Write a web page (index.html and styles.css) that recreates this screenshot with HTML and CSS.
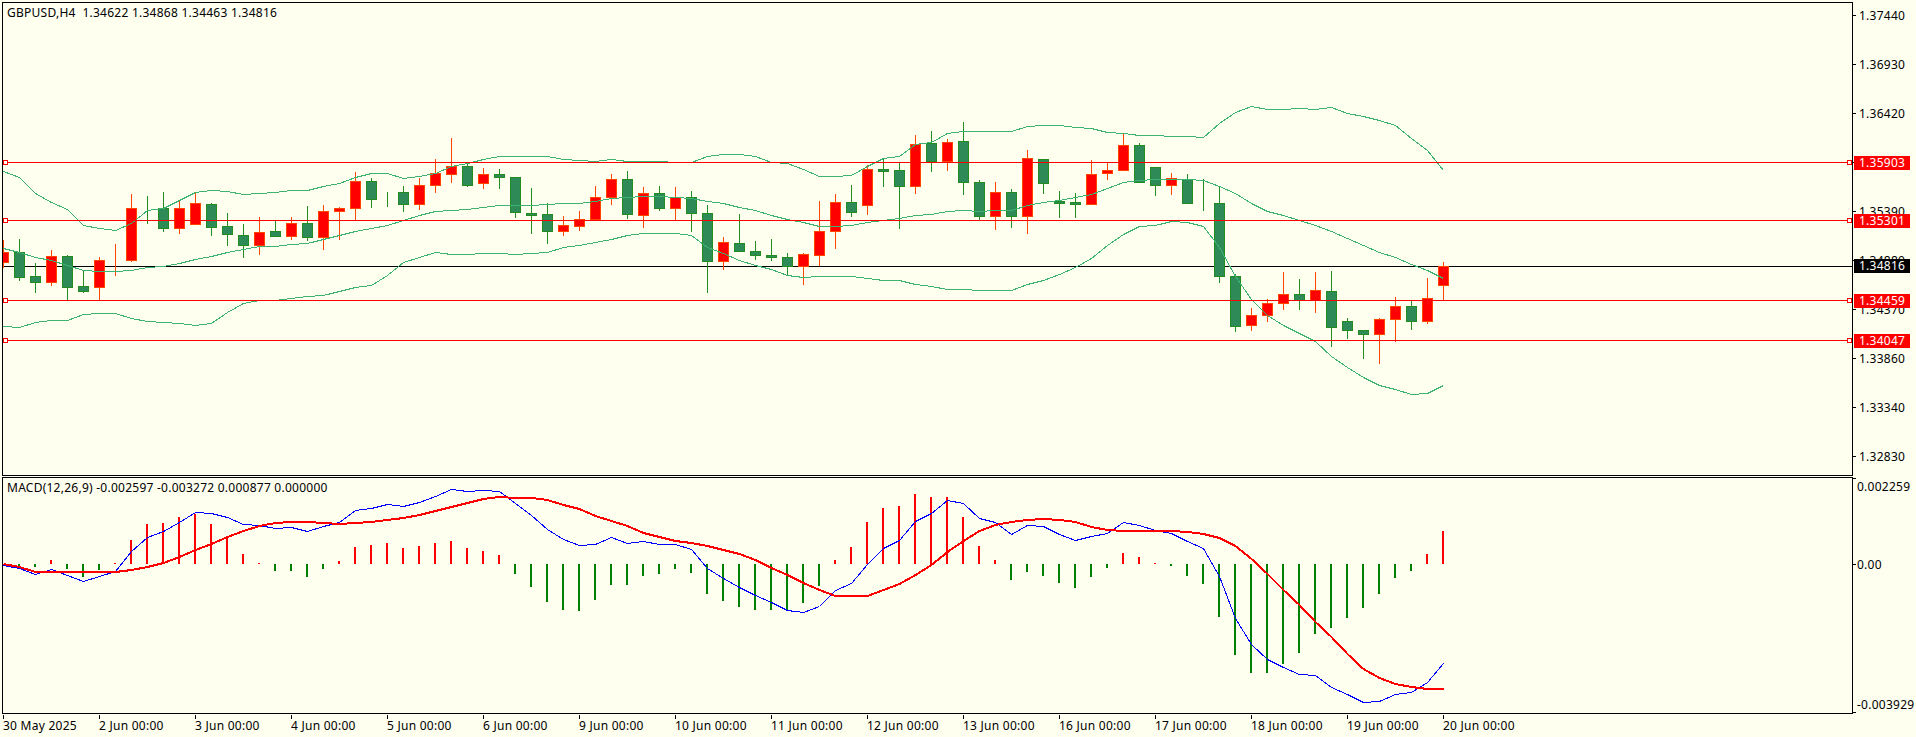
FILE: index.html
```html
<!DOCTYPE html>
<html lang="en">
<head>
<meta charset="utf-8">
<title>GBPUSD,H4</title>
<link rel="stylesheet" href="styles.css">
</head>
<body>
<div class="terminal">
  <div class="pane pane-main">
    <svg id="price" class="chart" viewBox="3 3 1849 472" width="1849" height="472"></svg>
    <div class="legend">GBPUSD,H4&nbsp; 1.34622 1.34868 1.34463 1.34816</div>
  </div>
  <div class="y-axis y-axis-main">
    <div class="tick-row"><i class="tick"></i><span>1.37440</span></div>
    <div class="tick-row"><i class="tick"></i><span>1.36930</span></div>
    <div class="tick-row"><i class="tick"></i><span>1.36420</span></div>
    <div class="tick-row"><i class="tick"></i><span>1.35910</span></div>
    <div class="tick-row"><i class="tick"></i><span>1.35390</span></div>
    <div class="tick-row"><i class="tick"></i><span>1.34880</span></div>
    <div class="tick-row"><i class="tick"></i><span>1.34370</span></div>
    <div class="tick-row"><i class="tick"></i><span>1.33860</span></div>
    <div class="tick-row"><i class="tick"></i><span>1.33340</span></div>
    <div class="tick-row"><i class="tick"></i><span>1.32830</span></div>
    <div class="tag tag-a">1.35903</div>
    <div class="tag tag-b">1.35301</div>
    <div class="tag tag-now">1.34816</div>
    <div class="tag tag-c">1.34459</div>
    <div class="tag tag-d">1.34047</div>
  </div>
  <div class="pane pane-macd">
    <svg id="macd" class="chart" viewBox="3 478 1849 235" width="1849" height="235"></svg>
    <div class="legend">MACD(12,26,9) -0.002597 -0.003272 0.000877 0.000000</div>
  </div>
  <div class="y-axis y-axis-macd">
    <div class="macd-row macd-top"><i class="tick"></i><span>0.002259</span></div>
    <div class="macd-row macd-zero"><i class="tick"></i><span>0.00</span></div>
    <div class="macd-row macd-low"><i class="tick"></i><span>-0.003929</span></div>
  </div>
  <div class="x-axis">
    <div class="x-cell"><i></i><span>30 May 2025</span></div>
    <div class="x-cell"><i></i><span>2 Jun 00:00</span></div>
    <div class="x-cell"><i></i><span>3 Jun 00:00</span></div>
    <div class="x-cell"><i></i><span>4 Jun 00:00</span></div>
    <div class="x-cell"><i></i><span>5 Jun 00:00</span></div>
    <div class="x-cell"><i></i><span>6 Jun 00:00</span></div>
    <div class="x-cell"><i></i><span>9 Jun 00:00</span></div>
    <div class="x-cell"><i></i><span>10 Jun 00:00</span></div>
    <div class="x-cell"><i></i><span>11 Jun 00:00</span></div>
    <div class="x-cell"><i></i><span>12 Jun 00:00</span></div>
    <div class="x-cell"><i></i><span>13 Jun 00:00</span></div>
    <div class="x-cell"><i></i><span>16 Jun 00:00</span></div>
    <div class="x-cell"><i></i><span>17 Jun 00:00</span></div>
    <div class="x-cell"><i></i><span>18 Jun 00:00</span></div>
    <div class="x-cell"><i></i><span>19 Jun 00:00</span></div>
    <div class="x-cell"><i></i><span>20 Jun 00:00</span></div>
  </div>
</div>
<script src="script.js"></script>
</body>
</html>
```
FILE: styles.css
```css
* { box-sizing: border-box; }
html, body { margin: 0; height: 100%; background: #fffff0; overflow: hidden; }
body { font: 12px/14px "Noto Sans", "DejaVu Sans", sans-serif; letter-spacing: 0.25px; color: #000; }

.terminal {
  display: grid;
  grid-template-columns: 1851px 1fr;
  grid-template-rows: 474px 237px auto;
  row-gap: 1px;
  padding: 2px 0 0 2px;
  height: 737px;
}
.pane { position: relative; border: 1px solid #000; }
.chart { display: block; overflow: hidden; shape-rendering: crispEdges; }
.legend { position: absolute; left: 4px; top: 3px; white-space: nowrap; }

.y-axis { position: relative; }
.y-axis-main { padding-top: 6px; }
.tick-row { display: flex; height: 49px; }
.tick { display: block; flex: none; width: 3px; height: 1px; margin-top: 7px; background: #000; }
.tick-row span { margin: 1px 0 0 3px; }

.tag { position: absolute; left: 1px; width: 56px; height: 14px; padding-left: 5px; color: #fff; background: #f00; }
.tag-a { top: 154px; }
.tag-b { top: 212px; }
.tag-now { top: 257px; background: #000; }
.tag-c { top: 292px; }
.tag-d { top: 332px; }

.macd-row { display: flex; height: 14px; }
.macd-row span { margin-left: 1px; }
.macd-top { margin-top: 3px; }
.macd-top .tick { margin-top: -2px; }
.macd-zero { margin-top: 63px; }
.macd-zero span { margin-top: 1px; }
.macd-low { margin-top: 127px; }
.macd-low .tick { margin-top: 14px; }

.x-axis { grid-column: 1 / -1; display: flex; }
.x-cell { flex: none; width: 96px; }
.x-cell i { display: block; width: 1px; height: 4px; margin-left: 1px; background: #000; }
.x-cell span { display: block; padding-left: 1px; white-space: nowrap; }

.candle-up { fill: #f00; stroke: #ff4500; }
.candle-down { fill: #2e8b57; stroke: #228b22; }
.wick-up { fill: none; stroke: #ff4500; }
.wick-down { fill: none; stroke: #228b22; }
.band { fill: none; stroke: #3cb371; }
.level { fill: none; stroke: #f00; }
.level-now { fill: none; stroke: #000; }
.handle { fill: #fffff0; stroke: #f00; }
.hist-up { fill: #f00; }
.hist-down { fill: #008000; }
.macd-line { fill: none; stroke: #00f; }
.signal-line { fill: none; stroke: #f00; stroke-width: 2; }
```
FILE: script.js
```js
var NS = 'http://www.w3.org/2000/svg';
function add(svg, tag, cls, attrs) {
  var el = document.createElementNS(NS, tag);
  el.setAttribute('class', cls);
  for (var k in attrs) el.setAttribute(k, attrs[k]);
  svg.appendChild(el);
}
function xAt(i) { return 3 + 16 * i; }

/* bar: direction, body top, body bottom, high, low (pixel rows) */
var bars = [
['u',252,262,240,267],['d',252,277,239,280],['d',276,282,263,292],['u',256,282,250,285],['d',256,287,255,300],
['d',286,291,270,292],['u',260,287,257,300],['u',260,260,244,275],['u',208,260,194,261],['d',208,208,196,223],
['d',208,228,192,231],['u',208,228,201,233],['u',203,224,192,224],['d',204,227,203,235],['d',226,234,213,245],
['d',235,245,224,257],['u',232,245,217,254],['d',231,236,221,236],['u',223,236,217,239],['d',223,237,206,240],
['u',211,237,205,249],['u',208,211,207,239],['u',181,208,172,220],['d',181,199,178,207],['d',192,192,192,206],
['d',192,204,186,211],['u',185,204,178,209],['u',173,185,159,192],['u',166,174,138,182],['d',166,185,163,186],
['u',174,183,168,188],['d',174,177,169,188],['d',177,212,177,217],['d',213,215,188,233],['d',214,231,203,243],
['u',225,231,216,235],['u',219,226,211,230],['u',197,219,186,219],['u',179,197,174,204],['d',179,214,171,218],
['u',193,215,187,227],['d',193,208,186,210],['u',197,208,187,220],['d',197,213,191,231],['d',213,261,205,292],
['u',242,261,237,269],['d',243,251,214,251],['d',251,255,241,259],['d',255,257,239,260],['d',257,266,253,275],
['u',254,266,253,284],['u',231,255,201,265],['u',202,231,194,248],['d',202,212,185,216],['u',169,205,165,214],
['d',169,171,159,186],['d',170,186,163,228],['u',144,186,135,193],['d',143,161,131,171],['u',142,161,139,170],
['d',141,182,122,194],['d',182,216,180,220],['u',192,216,182,229],['d',192,216,189,227],['u',158,216,150,233],
['d',159,183,159,193],['d',201,203,191,217],['d',202,204,193,217],['u',174,204,160,204],['u',170,173,162,179],
['u',145,170,133,170],['d',145,182,143,182],['d',167,185,167,195],['u',178,185,173,194],['d',179,203,174,203],
['d',203,203,179,210],['d',203,276,186,282],['d',276,326,274,331],['u',315,325,308,330],['u',303,315,299,321],
['u',294,303,272,309],['d',294,300,279,309],['u',290,300,272,312],['d',291,327,271,346],['d',321,330,318,338],
['d',330,334,330,358],['u',319,334,318,363],['u',306,319,297,341],['d',306,321,300,329],['u',298,321,278,323],
['u',266,285,262,300]
];

var upper = [171,177,193,202,209,225,228,230,223,210,208,200,192,190,191,194,193,192,190,190,186,183,177,173,173,178,176,173,166,163,
159,156,156,156,156,159,160,161,159,161,161,161,162,162,156,154,154,156,162,163,169,176,176,175,166,158,156,144,142,133,
131,131,131,131,126,125,125,127,128,132,133,135,135,136,136,137,123,112,106,109,109,108,109,107,113,116,120,125,138,150,170];
var middle = [248,252,257,260,265,270,271,271,270,267,266,263,259,256,252,249,246,246,244,243,239,235,231,228,225,220,215,211,210,209,
207,205,205,205,204,203,203,201,198,197,196,196,197,198,201,203,207,210,215,219,222,226,226,225,222,220,218,215,214,211,
210,211,210,210,205,202,200,197,194,188,182,180,179,179,179,180,186,193,203,211,215,220,225,231,238,245,252,257,264,270,278];
var lower = [326,327,322,320,320,314,313,313,318,321,322,323,325,323,312,303,300,300,298,296,295,291,287,285,275,262,257,252,254,254,
253,253,254,253,252,247,245,242,239,235,233,233,233,235,247,253,260,265,269,275,277,276,276,276,278,280,280,284,286,289,
289,290,290,290,284,280,274,267,258,245,234,226,225,221,222,226,247,276,299,315,325,333,341,356,367,377,385,389,394,393,385];

/* histogram: height of the bar in px, positive above the zero line */
var hist = [-2,-2,-3,4,-5,-13,-6,1,24,40,41,47,50,40,26,10,1,-7,-7,-13,-5,3,17,19,21,16,18,21,23,16,
13,9,-10,-23,-38,-46,-47,-36,-21,-21,-12,-10,-5,-9,-30,-37,-43,-46,-46,-46,-39,-22,4,17,42,56,58,70,67,67,
47,18,4,-16,-8,-12,-19,-24,-13,-4,11,7,1,-2,-12,-20,-53,-91,-109,-109,-100,-89,-70,-64,-54,-44,-30,-14,-7,10,33];
var macdLine = [565,568,574,569,575,581,576,571,551,537,531,522,512,513,517,524,525,528,527,531,526,522,510,508,504,506,502,496,489,491,
490,491,503,515,529,539,545,544,537,543,541,544,544,549,568,578,587,595,602,610,612,606,590,583,564,548,540,521,513,500,
503,518,522,534,525,526,534,540,536,533,522,525,530,533,541,548,576,618,644,659,667,674,675,687,694,702,701,694,692,682,663];
var signal = [564,567,572,572,572,572,572,572,570,567,563,557,550,544,537,531,526,523,522,522,523,524,523,522,520,518,515,511,507,503,
499,497,498,498,500,505,509,516,521,526,533,537,541,543,546,550,554,560,568,575,583,590,596,596,596,590,584,575,565,552,
541,531,525,522,520,519,520,522,527,530,531,531,531,531,532,534,538,546,559,574,590,605,622,637,654,669,678,684,687,689,689];

function points(ys, dy) {
  return ys.map(function (y, i) { return (xAt(i) + 0.5) + ',' + (y + dy); }).join(' ');
}

var price = document.getElementById('price');
add(price, 'path', 'level-now', { d: 'M3 266.5H1852' });
bars.forEach(function (b, i) {
  var x = xAt(i);
  add(price, 'path', b[0] === 'u' ? 'wick-up' : 'wick-down', { d: 'M' + (x + 0.5) + ' ' + b[3] + 'V' + (b[4] + 1) });
  add(price, 'rect', b[0] === 'u' ? 'candle-up' : 'candle-down', { x: x - 4.5, y: b[1] + 0.5, width: 10, height: b[2] - b[1] });
});
[upper, middle, lower].forEach(function (ys) {
  add(price, 'polyline', 'band', { points: points(ys, 0.5) });
});
[162, 220, 300, 340].forEach(function (y) {
  add(price, 'path', 'level', { d: 'M3 ' + (y + 0.5) + 'H1852' });
  add(price, 'rect', 'handle', { x: 3.5, y: y - 1.5, width: 4, height: 4 });
  add(price, 'rect', 'handle', { x: 1847.5, y: y - 1.5, width: 4, height: 4 });
});

var macd = document.getElementById('macd');
var ZERO = 564;
hist.forEach(function (h, i) {
  var y = h > 0 ? ZERO - h : ZERO;
  add(macd, 'rect', h > 0 ? 'hist-up' : 'hist-down', { x: xAt(i) - 1, y: y, width: 2, height: Math.abs(h) });
});
add(macd, 'polyline', 'macd-line', { points: points(macdLine, 0.5) });
add(macd, 'polyline', 'signal-line', { points: points(signal, 0) });
```
